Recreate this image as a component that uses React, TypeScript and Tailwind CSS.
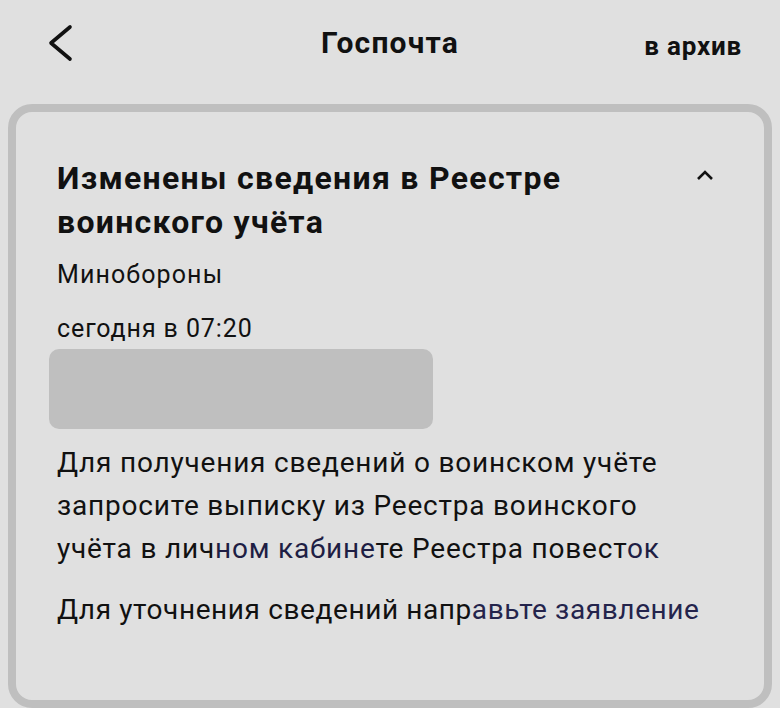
const font = { fontFamily: 'Roboto, "Noto Sans", sans-serif' }

export default function App() {
  return (
    <div className="h-[708px] w-[780px] overflow-hidden bg-[#e0e0e0] text-[#111]" style={font}>
      {/* Header */}
      <div className="relative flex h-[104px] items-start justify-center pt-[20px]">
        <button className="absolute left-[46px] top-[24px]">
          <svg width="30" height="38" viewBox="0 0 30 38">
            <path d="M24 3 L5 19 L24 35" fill="none" stroke="#111" strokeWidth="3.6" strokeLinecap="round" strokeLinejoin="round" />
          </svg>
        </button>
        <h1 className="text-[30px] font-bold tracking-[1.2px]">Госпочта</h1>
        <span className="absolute right-[38px] top-[27px] text-[26px] font-bold tracking-[0.8px]">в архив</span>
      </div>

      {/* Card */}
      <div className="mx-[8px] h-[604px] rounded-[24px] border-[8px] border-[#bfbfbf] px-[41px] pt-[44px]">
        <div className="flex items-start justify-between">
          <h2 className="text-[32px] font-bold leading-[44px] tracking-[1.3px]">
            Изменены сведения в Реестре
            <br />
            воинского учёта
          </h2>
          <svg width="20" height="14" viewBox="0 0 20 14" className="mr-[8px] mt-[12px]">
            <path d="M3 11 L10 4 L17 11" fill="none" stroke="#111" strokeWidth="2.6" />
          </svg>
        </div>
        <p className="mt-[12px] text-[25px] tracking-[1.1px]">Минобороны</p>
        <p className="mt-[16px] text-[25px] tracking-[0.9px]">сегодня в 07:20</p>
        <div className="-ml-[8px] mt-[2px] h-[80px] w-[384px] rounded-[10px] bg-[#bfbfbf]" />
        <p className="mt-[12px] text-[28px] leading-[43px] tracking-[0.8px]">
          Для получения сведений о воинском учёте
          <br />
          запросите выписку из Реестра воинского
          <br />
          учёта в лич<span className="text-[#1e1e44]">ном кабине</span>те Реестра повест
          <span className="text-[#1e1e44]">ок</span>
        </p>
        <p className="mt-[18px] text-[28px] leading-[43px] tracking-[0.6px]">
          Для уточнения сведений напр<span className="text-[#24244c]">авьте заявление</span>
        </p>
      </div>
    </div>
  )
}
